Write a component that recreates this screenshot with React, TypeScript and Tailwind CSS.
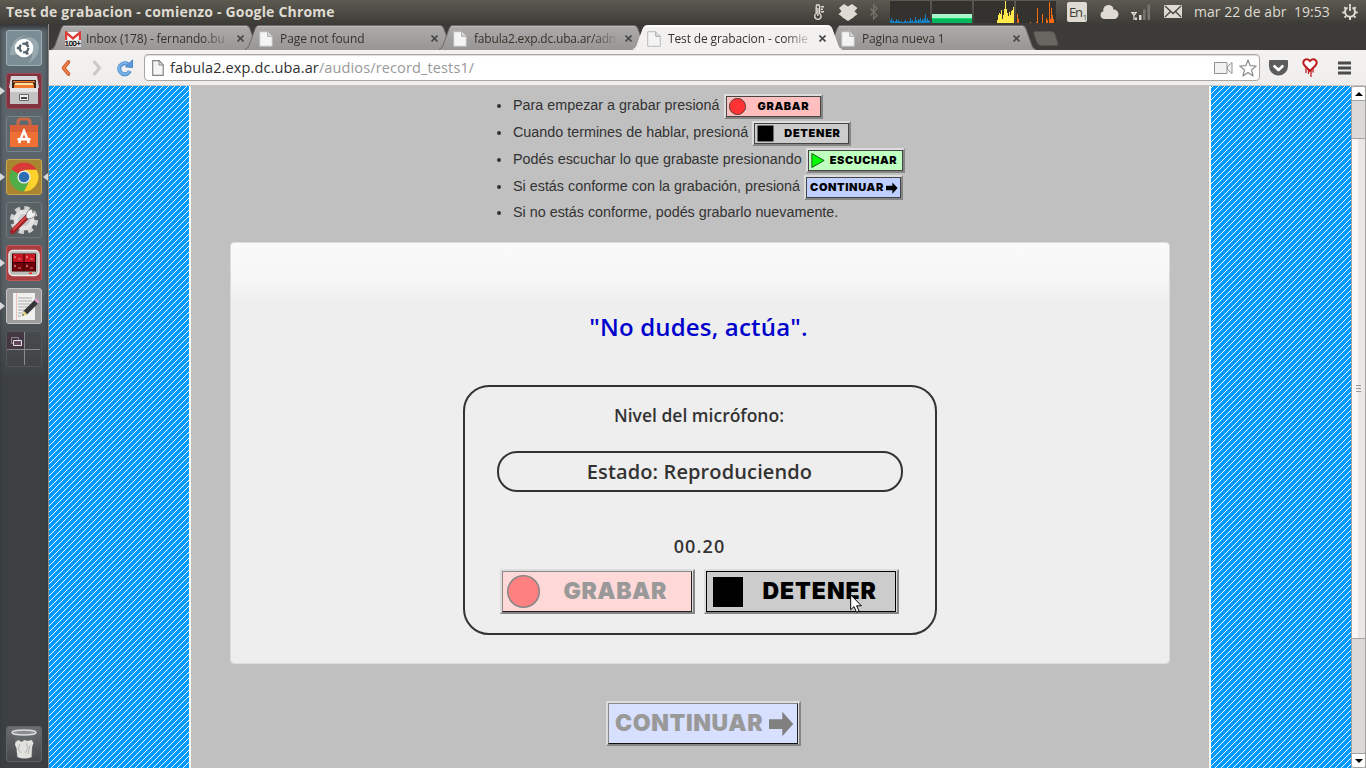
import React from "react";

const cpuBars = [3, 5, 2, 3, 1, 2, 4, 2, 3, 2, 1, 2, 1, 1, 2, 3, 1, 2, 1, 2, 5, 2, 3, 1, 2, 6, 3, 2, 4, 3, 5, 2, 4, 3, 5, 9, 3, 5, 3, 2];
const netBars = [3, 8, 10, 9, 13, 4, 8, 14, 22, 14, 10, 7, 11, 8, 12, 13, 16];
const diskBars: [number, number][] = [[1017, 9], [1018, 4], [1030, 1], [1036, 1], [1037, 15], [1042, 9], [1046, 5], [1047, 3], [1049, 21], [1050, 4], [1051, 15], [1052, 8], [1053, 4]];

function Indicators() {
  return (
    <svg className="h-6 w-[380px] shrink-0" viewBox="805 0 380 24">
      <g fill="none" stroke="#dfdbd2" strokeWidth="1.4">
        <path d="M816.2 13.5V6.5q0-1.7 1.7-1.7t1.7 1.7v7a3.2 3.2 0 1 1-3.4 0Z" />
        <path d="M817.9 8v8M821 6.8h3M821 9.3h2M821 11.8h3" />
      </g>
      <path d="M839 8l5-4 4 2.5L852 4l5.500 4-3 3.200 3 3-3 2-1 1.300-5.500 3.500-5.500-3.500-1-1.300-3-2 3-3Z" fill="#dfdbd2" />
      <path d="M870.500 8.500l6.500 7-3.300 3.500V5l3.300 3.500-6.500 7" fill="none" stroke="#77756e" strokeWidth="1.2" />
      <g shapeRendering="crispEdges">
        <path d="M890 1h40v22h-40zM932 1h40v22h-40zM974 1h40v22h-40zM1016 1h40v22h-40z" fill="#33322e" />
        {cpuBars.map((h, i) => <rect key={i} x={890 + i} y={23 - h} width="1" height={h} fill="#157fc2" />)}
        <rect x="932" y="14" width="40" height="4" fill="#a8f5cb" />
        <rect x="932" y="18" width="40" height="1" fill="#14e56f" />
        <rect x="932" y="19" width="40" height="4" fill="#03b55c" />
        {netBars.map((h, i) => <rect key={i} x={997 + i} y={23 - h} width="1" height={h} fill="#ffe94b" />)}
        {diskBars.map(([x, h]) => <rect key={x} x={x} y={23 - h} width="1" height={h} fill="#f5690f" />)}
      </g>
      <rect x="1067" y="2" width="20" height="20" rx="2" fill="#dfdbd2" />
      <text x="1069" y="17" fontSize="13" fontFamily="Open Sans, sans-serif" fill="#3c3b37" textLength="14">En</text>
      <text x="1083" y="20" fontSize="7" fontFamily="Open Sans, sans-serif" fill="#3c3b37">1</text>
      <path d="M1104 19a4 4 0 0 1-.6-7.800A5 5 0 0 1 1108.500 5a5 5 0 0 1 5 4.500 4.700 4.700 0 0 1 .500 9.500Z" fill="#dfdbd2" />
      <path d="M1131 12.500h6M1132 13l2 2.500 2-2.500M1134 13v7" fill="none" stroke="#dfdbd2" strokeWidth="1.2" />
      <path d="M1135 17.500h2V20h-2zM1139 15h2.500v5h-2.500z" fill="#dfdbd2" />
      <path d="M1143 9.500h2.500V20h-2.500zM1147.500 4.500h2.500V20h-2.500z" fill="#77756e" />
      <rect x="1164" y="5" width="18" height="13" rx="1" fill="#dfdbd2" />
      <path d="M1165 6l8 7.500 8-7.500M1165 17l5.500-5.500M1181 17l-5.500-5.500" fill="none" stroke="#45443f" strokeWidth="1.3" />
    </svg>
  );
}

function TopPanel() {
  return (
    <header className="flex h-6 shrink-0 items-center bg-linear-to-b from-[#5d5a50] via-[#4d4b44] to-[#3c3b37] text-[#dfdbd2]">
      <h1 className="w-[799px] pl-1.5 text-[14px] leading-6 font-bold tracking-[0.190px] whitespace-nowrap">Test de grabacion - comienzo - Google Chrome</h1>
      <div className="w-1.5" />
      <Indicators />
      <span className="ml-[9px] text-[14px] leading-6 tracking-[0.050px] whitespace-pre">mar 22 de abr  19:53</span>
      <svg className="mr-2 ml-auto size-4" viewBox="0 0 16 16" fill="none" stroke="#dfdbd2">
        <path d="M5.500 3.500a5 5 0 1 0 5 0" strokeWidth="2" />
        <path d="M8 0v7" strokeWidth="1.800" />
        <path d="M2.200 3.200l1.500 1.300M13.800 3.200l-1.500 1.300M.3 8.500h2.500M13.200 8.500h2.500M2.500 13.500l1.500-1.300M13.500 13.500L12 12.200M8 13v3" strokeWidth="2" />
      </svg>
    </header>
  );
}

type LauncherItem = { bg: string; art: React.ReactNode; left?: boolean; right?: boolean };

const launcher: LauncherItem[] = [
  {
    bg: "border-[#9db0b8] bg-[#7b8d95]",
    art: <>
      <path d="M4 25Q5 6 22 5q-9 2-12 9 2-6 14-7 8 2 9 10-1 12-11 16 5-5 4-9" fill="#a5b5bb" opacity=".7" />
      <circle cx="18" cy="18" r="9.300" fill="#fff" />
      <circle cx="18" cy="18" r="4.300" fill="none" stroke="#56636a" strokeWidth="2.300" strokeDasharray="7.500 1.500" />
      <circle cx="12.200" cy="18" r="1.500" fill="#56636a" /><circle cx="21" cy="12.800" r="1.500" fill="#56636a" /><circle cx="21" cy="23.200" r="1.500" fill="#56636a" />
    </>,
  },
  {
    bg: "border-[#9c4c57] bg-[#83333f]", left: true,
    art: <>
      <path d="M5 3h26l2 12H3z" fill="#d6d6d6" /><path d="M6 7h24v8H6z" fill="#3b211a" /><path d="M7 8h22v1.500H7zM8 11h20v4H8z" fill="#f07b2e" /><path d="M9 10h18v2H9z" fill="#ffdf9a" />
      <path d="M4 15h28v16H4z" fill="#c3c3c3" /><path d="M4 15h28v4H4z" fill="#e4e4e4" /><path d="M13.500 21.500h9v6h-9z" fill="#eee" stroke="#666" /><path d="M15 24h6v2h-6z" fill="#444" />
    </>,
  },
  {
    bg: "border-[#76838a] bg-[#5d686e]",
    art: <>
      <path d="M12 10V6q0-3 3-3h6q3 0 3 3v4" fill="none" stroke="#c96846" strokeWidth="3" />
      <path d="M4 9h28v22H4z" fill="#ef6f35" /><path d="M4 9h28v7H4z" fill="#d85f36" />
      <path d="M13 27l5-12 5 12M11.500 23.300h13" fill="none" stroke="#fff" strokeWidth="2.500" />
    </>,
  },
  {
    bg: "border-[#c9a850] bg-[#a98532]", left: true, right: true,
    art: <>
      <path d="M18 18L5.500 10.800A14.400 14.400 0 0 1 30.500 10.800Z" fill="#d93a35" />
      <path d="M18 18L5.500 10.800A14.400 14.400 0 0 0 18 32.400L24 21Z" fill="#51ad48" />
      <path d="M18 18l.5-7.200h12A14.400 14.400 0 0 1 18 32.400L24 21Z" fill="#fdd22b" />
      <circle cx="18" cy="18" r="6.600" fill="#eee" /><circle cx="18" cy="18" r="5.300" fill="#2e6db4" />
    </>,
  },
  {
    bg: "border-[#70787c] bg-[#596165]",
    art: <>
      <circle cx="18" cy="18" r="12" fill="none" stroke="#d2d2d2" strokeWidth="4" strokeDasharray="5.200 4.225" />
      <circle cx="18" cy="18" r="10.500" fill="#e3e3e3" /><circle cx="18" cy="18" r="6" fill="#c6cacc" />
      <path d="M6.500 29.500L21 15" stroke="#9e2226" strokeWidth="5" strokeLinecap="round" /><path d="M7 28L20 15" stroke="#d94743" strokeWidth="2" />
      <path d="M20 15q0-7 6-8l1 4 3-2q1 7-8 8z" fill="#f0f0f0" stroke="#777" strokeWidth=".8" />
    </>,
  },
  {
    bg: "border-[#c15c5c] bg-[#aa3d40]", left: true,
    art: <>
      <rect x="3" y="5.500" width="30" height="25" rx="4" fill="#bdbdb8" stroke="#e9e9e5" strokeWidth="1.500" />
      <rect x="6" y="8.500" width="24" height="18" fill="#350003" /><path d="M7 9h10.500v8H7zM18.500 9H29v8H18.500z" fill="#ca1723" /><path d="M7 18h10.500v8H7zM18.500 18H29v8H18.500z" fill="#740009" />
      <path d="M8 11l2 1-2 1M12 14h3M20 11l2 1-2 1M24 14h3M8 20l2 1-2 1M12 23h3M20 20l2 1-2 1M24 23h3" fill="none" stroke="#eda0a0" strokeWidth=".8" />
      <path d="M23 28.200h3" stroke="#f22" strokeWidth="1.500" />
    </>,
  },
  {
    bg: "border-[#c4c3c4] bg-[#9f9c9e]", left: true,
    art: <>
      <path d="M7 5h22v27H7z" fill="#f0f0ee" /><path d="M10.500 5v27" stroke="#e9b3ad" strokeWidth=".8" />
      <path d="M12 10h14M12 13h14M12 16h12M12 19h10M12 22h9M12 25h5M12 28h3" stroke="#aaa" />
      <path d="M19 25L31 13" stroke="#36363a" strokeWidth="5" /><path d="M30 14l2-2" stroke="#d9a0cf" strokeWidth="5" /><path d="M16 28l2-5 3.500 3.500z" fill="#e6d37e" /><path d="M16 28l1-2 1 1z" fill="#222" />
    </>,
  },
  {
    bg: "border-[#545558] bg-[#42444670]",
    art: <>
      <path d="M0 0h18v18H0z" fill="#433744" /><path d="M1 18.500h33M18.500 1v33" stroke="#8a898c" />
      <path d="M5.500 6.500h7v6h-7z" fill="none" stroke="#8e858e" /><path d="M7.500 9.500h8v5h-8z" fill="#63465a" stroke="#e5e0e4" />
    </>,
  },
];

function Arrow({ dir }: { dir: "l" | "r" }) {
  return <svg className="h-2 w-[5px]" viewBox="0 0 5 8"><path d={dir === "l" ? "M0 0l5 4-5 4z" : "M5 0L0 4l5 4z"} fill="#d8d8d8" /></svg>;
}

function Launcher() {
  return (
    <nav className="flex w-[49px] shrink-0 flex-col border-r border-[#8b8b8b] bg-linear-to-b from-[#5c676e] via-[#596166] via-35% to-[#3c4042] to-48% pt-1.5 pb-1.5 shadow-[inset_0_4px_4px_#35373a]">
      <div className="flex flex-col gap-[7px]">
        {launcher.map((item, i) => (
          <div key={i} className="flex items-center">
            <div className="w-1.5">{item.left && <Arrow dir="l" />}</div>
            <div className={`size-9 overflow-hidden rounded-[3px] border ${item.bg}`}>
              <svg className="-m-px size-9" viewBox="0 0 36 36">{item.art}</svg>
            </div>
            <div className="flex w-1.5 justify-end">{item.right && <Arrow dir="r" />}</div>
          </div>
        ))}
      </div>
      <div className="mt-auto ml-1.5 size-9 rounded-[3px] border border-[#606466] bg-linear-to-b from-[#6b6e70] to-[#45494b]">
        <svg className="-m-px size-9" viewBox="0 0 36 36">
          <path d="M8 8h20l-2 24H11z" fill="#64686a" />
          <path d="M9.500 16l3-2 3 2 3-2 3 1 4-1 2 3-1.500 4-.5 10q-7 3-14 0l-1-9-1.500-3z" fill="#e2e2df" />
          <path d="M14 18l-2 5 3 4M20 17l2 5-3 5M24 19l-2 9" fill="none" stroke="#b5b5b1" />
          <ellipse cx="18" cy="6.500" rx="12" ry="2.500" fill="#888c8e" stroke="#dadcda" strokeWidth="1.500" />
        </svg>
      </div>
    </nav>
  );
}

function PageIcon() {
  return (
    <svg className="h-4 w-[14px] shrink-0" viewBox="0 0 14 16">
      <path d="M.7 .7h8l4.600 4.600v10H.7z" fill="#f4f4f4" stroke="#b9b9b9" />
      <path d="M8.700 .7v4.600h4.600" fill="#ddd" stroke="#a8a8a8" />
    </svg>
  );
}

function GmailIcon() {
  return (
    <svg className="h-4 w-4 shrink-0" viewBox="0 0 16 16">
      <path d="M1 1h14v10H1z" fill="#fff" /><path d="M1 11V1.500l7 6 7-6V11" fill="none" stroke="#de3c36" strokeWidth="2.400" />
      <path d="M0 9h16v7H0z" fill="#ddd" />
      <text x="-.2" y="15.300" fontSize="7.500" fontFamily="Liberation Sans, sans-serif" fill="#000" stroke="#000" strokeWidth=".25" textLength="16">100+</text>
    </svg>
  );
}

const tabs = [
  { title: "Inbox (178) - fernando.bu", gmail: true, track: "tracking-[-0.130px]" },
  { title: "Page not found", track: "tracking-[-0.080px]" },
  { title: "fabula2.exp.dc.uba.ar/adn", track: "tracking-[-0.190px]" },
  { title: "Test de grabacion - comie", active: true, track: "tracking-[-0.130px]" },
  { title: "Pagina nueva 1", track: "tracking-[-0.150px]" },
];

function Tab({ title, gmail, active, track }: { title: string; gmail?: boolean; active?: boolean; track: string }) {
  return (
    <div className={`relative flex h-[26px] w-[194px] shrink-0 items-center pt-[3px] pl-[14px] ${active ? "z-10" : ""}`}>
      <svg className="absolute top-[1px] left-0 h-[25px] w-[209px]" viewBox="0 0 209 25">
        <defs><linearGradient id="tabShade" x1="0" x2="0" y1="0" y2="1"><stop stopColor="#adacab" /><stop offset="1" stopColor="#979694" /></linearGradient></defs>
        <path d="M0 25q3-1 4-4L10 4q1-3.500 4-3.500h181q3 0 4 3.500l6 17q1 3 4 4z" fill={active ? "#f2f1f0" : "url(#tabShade)"} />
        <path d="M0 24.500q3-1 4-4L10 4q1-3.500 4-3.500h181q3 0 4 3.500l6 17q1 3 4 3.500" fill="none" stroke={active ? "#f8f8f8" : "#6d6b68"} />
        <path d="M12 1.500h184" stroke={active ? "#fff" : "#bbb"} />
      </svg>
      <div className="relative flex items-center">
        <div className="w-[21px]">{gmail ? <GmailIcon /> : <PageIcon />}</div>
        <span className={`w-[146px] mask-r-from-80% text-[12px] leading-5 whitespace-nowrap text-[#353329] ${track}`}>{title}</span>
        <svg className="ml-[5px] size-[7px]" viewBox="0 0 7 7"><path d="M.5 .5l6 6M6.500 .5l-6 6" stroke="#494949" strokeWidth="1.600" /></svg>
      </div>
    </div>
  );
}

function TabStrip() {
  return (
    <div className="flex h-[26px] shrink-0 bg-linear-to-b from-[#3b3a36] to-[#3e3c38] pl-[2px]">
      {tabs.map((t) => <Tab key={t.title} {...t} />)}
      <svg className="mt-[7px] ml-[12px] h-[15px] w-[26px]" viewBox="0 0 26 15"><path d="M2 .5h16q3 0 4 3l3 9q0 2-2 2H8q-3 0-4-3L1 3Q0 .5 2 .5z" fill="#686661" stroke="#55534e" /></svg>
    </div>
  );
}

function Toolbar() {
  return (
    <div className="flex h-9 shrink-0 items-center border-b border-[#c8c6c4] bg-linear-to-b from-[#f3f2f1] to-[#efeeec]">
      <svg className="ml-[11px] h-[18px] w-3" viewBox="0 0 12 18"><path d="M8.500 3L3.500 9l5 6" fill="none" stroke="#ca592b" strokeWidth="3.600" strokeLinecap="round" strokeLinejoin="round" /><path d="M8.500 3L3.500 9l5 6" fill="none" stroke="#f2844a" strokeWidth="1.600" strokeLinecap="round" /></svg>
      <svg className="ml-[19px] h-[18px] w-3" viewBox="0 0 12 18"><path d="M3.500 3l5 6-5 6" fill="none" stroke="#cccac8" strokeWidth="3.200" strokeLinecap="round" strokeLinejoin="round" /></svg>
      <svg className="ml-[13px] size-[18px]" viewBox="0 0 18 18"><path d="M12 5.400A5.500 5.500 0 1 0 13.800 12" fill="none" stroke="#4d8ecf" strokeWidth="4" /><path d="M9.500 7.800L16.500 1v7.500z" fill="#5b9bdb" stroke="#4585c6" /><path d="M11.500 5A5.500 5.500 0 1 0 13.500 12" fill="none" stroke="#79b2e8" strokeWidth="2" /></svg>
      <div className="ml-[10px] flex h-[27px] w-[1116px] items-center rounded-[4px] border border-[#aaa6a1] bg-white pl-[7px] shadow-[inset_0_1px_1px_#ddd]">
        <svg className="h-4 w-3" viewBox="0 0 12 16"><path d="M.7 .7h6.500l4 4.300v10.300H.7z" fill="#f6f6f6" stroke="#858585" strokeWidth="1.200" /><path d="M7 .7V5h4.200" fill="none" stroke="#858585" /></svg>
        <span className="ml-[6px] text-[14.500px] leading-6 tracking-[0.130px] text-[#999]"><span className="text-[#303030]">fabula2.exp.dc.uba.ar</span>/audios/record_tests1/</span>
        <svg className="ml-auto h-3 w-[19px]" viewBox="0 0 19 12" fill="#f2f2f2" stroke="#929292"><path d="M.5 .5h12.500v11H.5zM13.500 4.500l4.500-4v11l-4.500-4z" /></svg>
        <svg className="mr-[2px] ml-[6px] size-[18px]" viewBox="0 0 18 18"><path d="M9 1l2.200 5.700 6 .3-4.700 3.900 1.600 6L9 13.500l-5.100 3.400 1.600-6L.8 7l6-.3z" fill="#fff" stroke="#8a8a8a" strokeWidth="1.200" strokeLinejoin="round" /></svg>
      </div>
      <svg className="ml-[9px] h-4 w-[19px]" viewBox="0 0 19 16"><path d="M0 1q0-1 1-1h17q1 0 1 1v5a9.500 9.500 0 0 1-19 0z" fill="#5c5c5c" /><path d="M5.500 6.300l4 3.700 4-3.700" fill="none" stroke="#fff" strokeWidth="2.700" strokeLinecap="round" strokeLinejoin="round" /></svg>
      <svg className="ml-[14px] h-[19px] w-4" viewBox="0 0 16 19"><path d="M8 13L2.500 7.500Q.2 4.500 2.300 2.300 5.200-.2 8 3q2.800-3.200 5.700-.7 2.100 2.200-.2 5.200z" fill="#fff" stroke="#bd1c1e" strokeWidth="2" /><path d="M4 10v5M6.500 12v4M9 12v7M11 10.500v4" stroke="#c22325" strokeWidth="1.300" /></svg>
      <svg className="ml-5 h-[14px] w-[13px]" viewBox="0 0 13 14"><path d="M0 2h13M0 7h13M0 12h13" stroke="#4b4b4b" strokeWidth="3" /></svg>
    </div>
  );
}

const hatchWidth = 140;
const hatchHeight = 682;

function hatchPath(phase: number) {
  let d = "";
  for (let y = 0; y < hatchHeight; y++) {
    for (let x = (((phase - y) % 6) + 6) % 6; x < hatchWidth; x += 6) d += `M${x} ${y}h1v1h-1z`;
  }
  return d;
}

const hatchLeft = hatchPath(5);
const hatchRight = hatchPath(1);

function Hatch({ d }: { d: string }) {
  return (
    <svg className="h-[682px] w-[140px] shrink-0 bg-[#0099ff]" viewBox="0 0 140 682" shapeRendering="crispEdges">
      <path d={d} fill="#fff" />
    </svg>
  );
}

function Glyph({ kind, cls, fill, line }: { kind: string; cls: string; fill: string; line: string }) {
  const shapes: Record<string, React.ReactNode> = {
    circle: <circle cx="16" cy="16" r="15.300" fill={fill} stroke={line} strokeWidth="1.500" />,
    square: <path d="M1 1h30v30H1z" fill={fill} />,
    play: <path d="M2 1l28 15L2 31z" fill={fill} stroke={line} strokeWidth="2" />,
    arrow: <path d="M0 10h17V1l14 15-14 15v-9H0z" fill={fill} />,
  };
  return <svg className={`shrink-0 ${cls}`} viewBox="0 0 32 32" preserveAspectRatio="none">{shapes[kind]}</svg>;
}

function SmallButton({ label, bg, icon, pad, text }: { label: string; bg: string; icon: [string, string, string, string]; pad: string; text: string }) {
  const glyph = <Glyph kind={icon[0]} fill={icon[1]} line={icon[2]} cls={icon[3]} />;
  return (
    <button className="flex h-[25px] w-[99px] shrink-0 border-2 border-t-[#dddddd] border-r-[#858585] border-b-[#858585] border-l-[#dddddd] bg-[#dcdcdc]">
      <span className={`flex h-[21px] w-[95px] items-center border border-[#444] ${bg} ${pad}`}>
        {icon[0] !== "arrow" && glyph}
        <span className={`font-["Inter"] text-[11px] leading-[19px] font-black text-black ${text}`}>{label}</span>
        {icon[0] === "arrow" && glyph}
      </span>
    </button>
  );
}

const steps = [
  { text: "Para empezar a grabar presioná", button: <SmallButton label="GRABAR" bg="bg-[#ffbfbf]" pad="pl-[2px]" text="ml-[12px] tracking-[0.650px]" icon={["circle", "#ff3333", "#333", "size-[17px]"]} /> },
  { text: "Cuando termines de hablar, presioná", button: <SmallButton label="DETENER" bg="bg-[#cccccc]" pad="pl-[2px]" text="ml-[10px] tracking-[0.700px]" icon={["square", "#000", "#000", "size-[17px]"]} /> },
  { text: "Podés escuchar lo que grabaste presionando", button: <SmallButton label="ESCUCHAR" bg="bg-[#bfffbf]" pad="pl-[2px]" text="ml-[5px] tracking-[0.600px]" icon={["play", "#00ff00", "#174c17", "h-[15px] w-[14px]"]} /> },
  { text: "Si estás conforme con la grabación, presioná", button: <SmallButton label="CONTINUAR" bg="bg-[#bfcfff]" pad="pl-[3px]" text="mr-[2px] tracking-[0.620px]" icon={["arrow", "#000", "#000", "h-[12px] w-[12px]"]} /> },
  { text: "Si no estás conforme, podés grabarlo nuevamente." },
];

function BigButton({ children, inner }: { children: React.ReactNode; inner: string }) {
  return (
    <button className="flex h-[45px] w-[195px] shrink-0 border-2 border-t-[#dddddd] border-r-[#858585] border-b-[#858585] border-l-[#dddddd] bg-[#dcdcdc]">
      <span className={`flex h-[41px] w-[190px] items-center border ${inner}`}>{children}</span>
    </button>
  );
}

function Recorder() {
  return (
    <section className="mt-[42px] flex h-[250px] w-[474px] flex-col items-center rounded-[26px] border-2 border-[#333] text-[#333]">
      <h3 className="mt-[16px] mr-[2px] text-[17.500px] leading-6 font-semibold">Nivel del micrófono:</h3>
      <div className="mt-[24px] flex h-[41px] w-[406px] items-center justify-center rounded-[20px] border-2 border-[#333] pt-px pr-px text-[20px] font-semibold tracking-[0.120px]">Estado: Reproduciendo</div>
      <div className="mt-[42px] mr-px text-[18px] leading-6 font-semibold tracking-[1.100px]">00.20</div>
      <div className="mt-[11px] mr-[2px] flex gap-[9px]">
        <BigButton inner="border-[#888] border-r-[#222] border-b-[#222] bg-[#ffd8d8] pl-[4px]">
          <Glyph kind="circle" cls="size-[33px]" fill="#ff8080" line="#888" />
          <span className="ml-[24px] font-['Inter'] text-[23px] font-black tracking-[0.550px] text-[#999]">GRABAR</span>
        </BigButton>
        <BigButton inner="border-black bg-[#cccccc] pl-[5px]">
          <Glyph kind="square" cls="size-[32px]" fill="#000" line="#000" />
          <span className="ml-[19px] font-['Inter'] text-[23px] font-black tracking-[0.950px] text-black">DETENER</span>
        </BigButton>
      </div>
    </section>
  );
}

function Content() {
  return (
    <main className="flex w-[1022px] shrink-0 flex-col items-center border-x-2 border-white bg-[#c0c0c0]">
      <ul className="mt-[6px] ml-[306px] flex h-[135px] w-[410px] list-none flex-col self-start font-['Liberation_Sans'] text-[14.350px] text-[#333]">
        {steps.map((s) => (
          <li key={s.text} className="flex h-[27px] items-start whitespace-nowrap last:-mt-px">
            <span className="mt-[12px] mr-[12px] size-1 shrink-0 rounded-full bg-[#333]" />
            <span className="mt-[3px] mr-[4px] leading-5">{s.text}</span>
            <span className="mt-[2px]">{s.button}</span>
          </li>
        ))}
      </ul>
      <div className="mt-[15px] flex h-[422px] w-[940px] flex-col items-center rounded-[4px] border border-[#dcdcdc] bg-linear-to-b from-[#fafafa] via-[#f5f5f5] via-[40px] to-[#eeeeee] to-[60px]">
        <h2 className="mt-[68px] mr-[3px] text-[24px] leading-8 font-semibold tracking-[0.180px] text-[#0000cc]">"No dudes, actúa".</h2>
        <Recorder />
      </div>
      <div className="mt-[37px] pl-[7px]">
        <BigButton inner="border-[#888] border-r-[#222] border-b-[#111] bg-[#d8e0ff] pl-[6px]">
          <span className="font-['Inter'] text-[23px] font-black tracking-[0.600px] text-[#999]">CONTINUAR</span>
          <Glyph kind="arrow" cls="ml-[6px] h-[26px] w-[25px]" fill="#808080" line="#808080" />
        </BigButton>
      </div>
    </main>
  );
}

function Scrollbar() {
  return (
    <div className="flex flex-1 flex-col border-x border-[#a5a3a0] bg-[#dcdad9]">
      <div className="flex h-[15px] items-center justify-center rounded-t-[2px] border-y border-[#a5a3a0] bg-white"><svg className="h-1 w-2" viewBox="0 0 8 4"><path d="M0 4h8L4 0z" /></svg></div>
      <div className="mt-[37px] flex h-[501px] flex-col items-center justify-center gap-[2px] border-y border-[#a5a3a0] bg-linear-to-r from-[#f9f7f6] from-50% to-[#eae8e7] to-50%">
        <span className="h-px w-[5px] bg-[#999]" /><span className="h-px w-[5px] bg-[#999]" /><span className="h-px w-[5px] bg-[#999]" />
      </div>
      <div className="mt-auto flex h-[15px] items-center justify-center rounded-b-[2px] border-y border-[#a5a3a0] bg-white"><svg className="h-1 w-2" viewBox="0 0 8 4"><path d="M0 0h8L4 4z" /></svg></div>
    </div>
  );
}

export default function App() {
  return (
    <div className="relative flex h-[768px] w-[1366px] flex-col overflow-hidden font-['Open_Sans',sans-serif]">
      <TopPanel />
      <div className="flex min-h-0 flex-1">
        <Launcher />
        <div className="flex min-w-0 flex-1 flex-col">
          <TabStrip />
          <Toolbar />
          <div className="flex min-h-0 flex-1">
            <Hatch d={hatchLeft} />
            <Content />
            <Hatch d={hatchRight} />
            <Scrollbar />
          </div>
        </div>
      </div>
      <svg className="absolute top-[594px] left-[850px] h-5 w-3.5" viewBox="0 0 14 20"><path d="M.7 .8v15l3.300-3.200 2.500 5.700 2.600-1.200-2.500-5.300h4.800z" fill="#fff" stroke="#000" /></svg>
    </div>
  );
}
